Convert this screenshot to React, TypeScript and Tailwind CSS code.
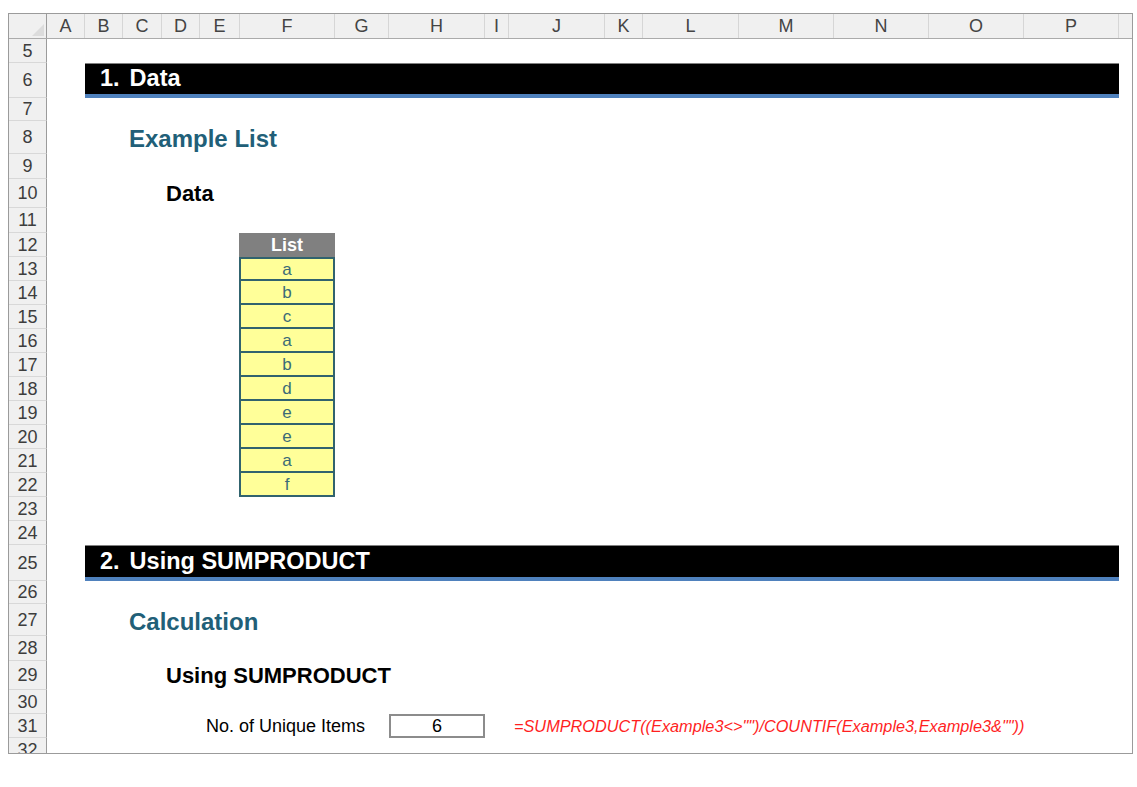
import React from "react";

type Col = { label: string; w: string };

const cols: Col[] = [
  { label: "A", w: "w-[38px]" },
  { label: "B", w: "w-[38px]" },
  { label: "C", w: "w-[39px]" },
  { label: "D", w: "w-[38px]" },
  { label: "E", w: "w-[40px]" },
  { label: "F", w: "w-[95px]" },
  { label: "G", w: "w-[54px]" },
  { label: "H", w: "w-[96px]" },
  { label: "I", w: "w-[24px]" },
  { label: "J", w: "w-[96px]" },
  { label: "K", w: "w-[38px]" },
  { label: "L", w: "w-[96px]" },
  { label: "M", w: "w-[95px]" },
  { label: "N", w: "w-[95px]" },
  { label: "O", w: "w-[95px]" },
  { label: "P", w: "w-[95px]" },
];

const listItems = ["a", "b", "c", "a", "b", "d", "e", "e", "a", "f"];

function Row({ n, h, children }: { n: number; h: string; children?: React.ReactNode }) {
  return (
    <div className={`flex shrink-0 ${h}`}>
      <div className="w-[38px] shrink-0 flex items-center justify-center bg-[#f0f0f0] border-r border-r-[#9b9b9b] border-b border-b-[#d8d8d8] text-[18px] leading-none text-[#3d3d3d]">
        {n}
      </div>
      <div className="flex-1 flex items-center">{children}</div>
    </div>
  );
}

function SectionBar({ num, title }: { num: string; title: string }) {
  return (
    <div className="ml-[38px] w-[1034px] h-full flex flex-col">
      <div className="flex-1 flex items-center gap-[10px] pl-[15px] bg-black border-t border-[#808080] text-white font-bold text-[23.5px] leading-none">
        <span>{num}</span>
        <span>{title}</span>
      </div>
      <div className="h-[4px] bg-[#4f81bd]" />
    </div>
  );
}

function Heading({ children }: { children: React.ReactNode }) {
  return (
    <div className="ml-[82px] pt-[3px] text-[24px] font-bold leading-none text-[#215f78]">
      {children}
    </div>
  );
}

function SubHeading({ children }: { children: React.ReactNode }) {
  return (
    <div className="ml-[119px] text-[22px] font-bold leading-none text-black">{children}</div>
  );
}

function ListCell({ value, first }: { value: string; first: boolean }) {
  return (
    <div
      className={`ml-[192px] w-[96px] h-full flex items-center justify-center bg-[#ffff99] border-x-2 border-b-2 border-[#31636e] text-[17px] leading-none text-[#3b6b77] ${
        first ? "border-t-2" : ""
      }`}
    >
      {value}
    </div>
  );
}

export default function App() {
  return (
    <div className="w-[1137px] h-[787px] bg-white pt-[13px] pl-[8px] font-['Liberation_Sans',Arial,sans-serif]">
      <div className="w-[1125px] h-[741px] border border-[#9b9b9b] overflow-hidden flex flex-col">
        {/* column headers */}
        <div className="flex h-[25px] shrink-0 bg-[#f0f0f0] border-b border-[#ababab]">
          <div className="w-[38px] shrink-0 border-r border-[#9b9b9b] flex items-end justify-end p-[2px]">
            <svg width="12" height="12" viewBox="0 0 12 12">
              <polygon points="12,0 12,12 0,12" fill="#dcdcdc" />
            </svg>
          </div>
          {cols.map((c) => (
            <div
              key={c.label}
              className={`${c.w} shrink-0 flex items-center justify-center border-r border-[#d6d6d6] text-[18px] leading-none text-[#444]`}
            >
              {c.label}
            </div>
          ))}
          <div className="flex-1" />
        </div>

        <Row n={5} h="h-[24px]" />
        <Row n={6} h="h-[35px]">
          <SectionBar num="1." title="Data" />
        </Row>
        <Row n={7} h="h-[23px]" />
        <Row n={8} h="h-[33px]">
          <Heading>Example List</Heading>
        </Row>
        <Row n={9} h="h-[25px]" />
        <Row n={10} h="h-[29px]">
          <SubHeading>Data</SubHeading>
        </Row>
        <Row n={11} h="h-[25px]" />
        <Row n={12} h="h-[24px]">
          <div className="ml-[192px] w-[96px] h-full flex items-center justify-center bg-[#808080] text-white font-bold text-[18px] leading-none">
            List
          </div>
        </Row>
        {listItems.map((v, i) => (
          <Row key={i} n={13 + i} h="h-[24px]">
            <ListCell value={v} first={i === 0} />
          </Row>
        ))}
        <Row n={23} h="h-[24px]" />
        <Row n={24} h="h-[24px]" />
        <Row n={25} h="h-[36px]">
          <SectionBar num="2." title="Using SUMPRODUCT" />
        </Row>
        <Row n={26} h="h-[23px]" />
        <Row n={27} h="h-[32px]">
          <Heading>Calculation</Heading>
        </Row>
        <Row n={28} h="h-[25px]" />
        <Row n={29} h="h-[29px]">
          <SubHeading>Using SUMPRODUCT</SubHeading>
        </Row>
        <Row n={30} h="h-[24px]" />
        <Row n={31} h="h-[24px]">
          <div className="w-[342px] pr-[24px] text-right text-[18px] leading-none text-black">
            No. of Unique Items
          </div>
          <div className="w-[96px] h-full flex items-center justify-center border-2 border-[#8c8c8c] text-[18px] leading-none text-black">
            6
          </div>
          <div className="ml-[29px] italic text-[16.3px] leading-none text-[#ff1f1f] whitespace-pre">
            {'=SUMPRODUCT((Example3<>"")/COUNTIF(Example3,Example3&""))'}
          </div>
        </Row>
        <Row n={32} h="h-[24px]" />
      </div>
    </div>
  );
}
